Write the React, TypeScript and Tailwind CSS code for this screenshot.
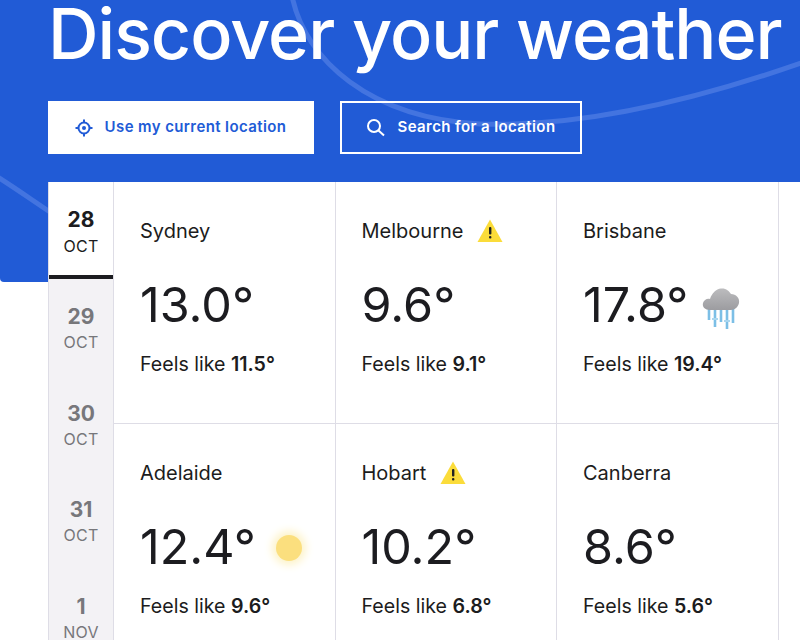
const rows = [
  [
    { city: "Sydney", temp: "13.0°", feels: "11.5°" },
    { city: "Melbourne", temp: "9.6°", feels: "9.1°", warn: true },
    { city: "Brisbane", temp: "17.8°", feels: "19.4°", icon: "rain" },
  ],
  [
    { city: "Adelaide", temp: "12.4°", feels: "9.6°", icon: "sun" },
    { city: "Hobart", temp: "10.2°", feels: "6.8°", warn: true },
    { city: "Canberra", temp: "8.6°", feels: "5.6°" },
  ],
];

const days = [
  { day: "28", month: "OCT" },
  { day: "29", month: "OCT" },
  { day: "30", month: "OCT" },
  { day: "31", month: "OCT" },
  { day: "1", month: "NOV" },
];

function Warning() {
  return (
    <svg width="26" height="23" viewBox="0 0 26 23" className="ml-[14px] mb-[1px]">
      <path d="M13 0.5 L25.5 23 H0.5 Z" fill="#fbdc3a" />
      <rect x="12" y="8" width="2.4" height="7.5" rx="1" fill="#222" />
      <rect x="12" y="17" width="2.4" height="2.6" rx="1" fill="#222" />
    </svg>
  );
}

function RainCloud() {
  return (
    <svg width="38" height="42" viewBox="0 0 38 42" className="ml-[14px] mt-[8px]">
      <defs>
        <linearGradient id="cloud" x1="0" y1="0" x2="0" y2="1">
          <stop offset="0" stopColor="#bcbcbe" />
          <stop offset="1" stopColor="#9c9ca0" />
        </linearGradient>
      </defs>
      <g stroke="#7cbfe6" strokeWidth="2.6">
        <path d="M7 20 V32 M13 20 V39 M19 20 V34 M25 20 V41 M31 20 V35" />
      </g>
      <path d="M10 31 H16 M22 33 H28" stroke="#a9d6ef" strokeWidth="2" />
      <path
        d="M8 22 C3 22 0 19 1 15 C2 12 5 10 8 11 C10 5 14 1 19 0.5 C24 0 27 3 29 6 C34 6 38 10 37 15 C36 19 33 22 29 22 Z"
        fill="url(#cloud)"
      />
    </svg>
  );
}

function Sun() {
  return (
    <div className="ml-[20px] mt-[2px] h-[26px] w-[26px] rounded-full bg-[#fbdf7e] shadow-[0_0_8px_4px_#fdf3c8]" />
  );
}

function Cell({ city, temp, feels, warn, icon }: { city: string; temp: string; feels: string; warn?: boolean; icon?: string }) {
  return (
    <div className="h-[242px] w-[221.5px] shrink-0 border-r border-b border-[#dedde6] pl-[26px] pt-[36px]">
      <div className="flex h-[26px] items-center text-[20px] leading-[26px] text-[#1c1c20]">
        {city}
        {warn && <Warning />}
      </div>
      <div className="mt-[32px] flex h-[58px] items-center text-[48.5px] leading-[58px] text-[#1c1c20]">
        {temp}
        {icon === "rain" && <RainCloud />}
        {icon === "sun" && <Sun />}
      </div>
      <div className="mt-[17px] text-[19.6px] leading-[26px] text-[#1c1c20]">
        Feels like <span className="font-semibold">{feels}</span>
      </div>
    </div>
  );
}

export default function App() {
  return (
    <div className="relative h-[640px] w-[800px] overflow-hidden bg-white font-['Inter',sans-serif]">
      <div className="relative h-[282px] overflow-hidden rounded-bl-[4px] bg-[#215bd6]">
        <svg width="800" height="282" viewBox="0 0 800 282" fill="none" className="absolute left-0 top-0">
          <path
            d="M292 -4 C305 60 370 118 480 124 C590 128 710 95 804 62"
            stroke="#4374e0"
            strokeWidth="5"
          />
          <path d="M-4 176 C15 188 32 200 50 212" stroke="#4374e0" strokeWidth="5" />
        </svg>
        <div className="relative pl-[48px]">
          <h1 className="h-[101px] whitespace-nowrap text-[70px] font-medium leading-[68px] tracking-[-1px] text-white">
            Discover your weather
          </h1>
          <div className="flex gap-[26px]">
            <button className="flex h-[53px] w-[266px] items-center justify-center gap-[12px] bg-white text-[15px] font-semibold tracking-[0.4px] text-[#215bd6]">
              <svg width="18" height="18" viewBox="0 0 18 18" fill="none" stroke="#215bd6" strokeWidth="2" className="-ml-[1px]">
                <circle cx="9" cy="9" r="5.5" />
                <circle cx="9" cy="9" r="2" fill="#215bd6" stroke="none" />
                <path d="M9 0.5 V3.5 M9 14.5 V17.5 M0.5 9 H3.5 M14.5 9 H17.5" />
              </svg>
              Use my current location
            </button>
            <button className="flex h-[53px] w-[242px] items-center justify-center gap-[12px] border-2 border-white text-[15px] font-semibold tracking-[0.4px] text-white">
              <svg width="20" height="20" viewBox="0 0 20 20" fill="none" stroke="white" strokeWidth="2" className="-ml-[1px]">
                <circle cx="8" cy="8" r="6" />
                <path d="M12.5 12.5 L18 17.5" />
              </svg>
              Search for a location
            </button>
          </div>
        </div>
      </div>

      <div className="relative -mt-[100px] ml-[48px] flex bg-white">
        <div className="h-[500px] w-[66px] shrink-0 border-x border-[#dedde6] bg-[#f3f2f5] text-center">
          {days.map((d, i) => (
            <div
              key={d.day}
              className={
                i === 0
                  ? "h-[97px] border-b-[4px] border-[#1c1c20] bg-white pt-[25px] text-[#1c1c20]"
                  : "h-[96.6px] pt-[25px] text-[#77777b]"
              }
            >
              <div className="text-[21px] font-bold leading-[26px]">{d.day}</div>
              <div className={i === 0 ? "text-[16px] leading-[26px] tracking-[0.3px]" : "text-[16px] leading-[25px] tracking-[0.3px]"}>
                {d.month}
              </div>
            </div>
          ))}
        </div>
        <div>
          {rows.map((row) => (
            <div key={row[0].city} className="flex">
              {row.map((c) => (
                <Cell key={c.city} {...c} />
              ))}
            </div>
          ))}
        </div>
      </div>
    </div>
  );
}
